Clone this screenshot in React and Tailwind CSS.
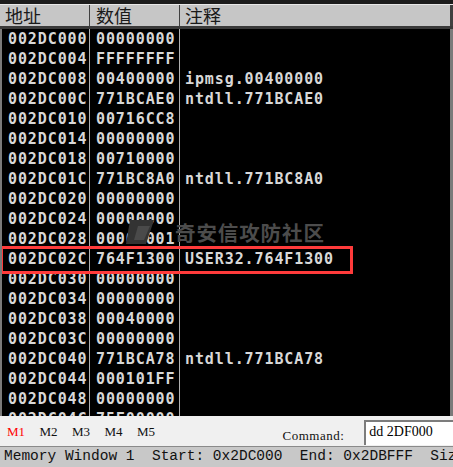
const rows = [
  ['002DC000', '00000000', ''],
  ['002DC004', 'FFFFFFFF', ''],
  ['002DC008', '00400000', 'ipmsg.00400000'],
  ['002DC00C', '771BCAE0', 'ntdll.771BCAE0'],
  ['002DC010', '00716CC8', ''],
  ['002DC014', '00000000', ''],
  ['002DC018', '00710000', ''],
  ['002DC01C', '771BC8A0', 'ntdll.771BC8A0'],
  ['002DC020', '00000000', ''],
  ['002DC024', '00000000', ''],
  ['002DC028', '00000001', ''],
  ['002DC02C', '764F1300', 'USER32.764F1300'],
  ['002DC030', '00000000', ''],
  ['002DC034', '00000000', ''],
  ['002DC038', '00040000', ''],
  ['002DC03C', '00000000', ''],
  ['002DC040', '771BCA78', 'ntdll.771BCA78'],
  ['002DC044', '000101FF', ''],
  ['002DC048', '00000000', ''],
  ['002DC04C', '75F00000', ''],
]

const tabs = ['M1', 'M2', 'M3', 'M4', 'M5']

export default function App() {
  return (
    <div className="w-[453px] h-[467px] flex flex-col overflow-hidden bg-black">
      {/* clipped row above the header */}
      <div className="h-[4px] bg-[#1c1c1c] shrink-0" />
      <div className="h-[1px] bg-[#e8e8e8] shrink-0" />

      {/* column header */}
      <div className="h-[24px] shrink-0 grid grid-cols-[90px_90px_1fr] bg-[#c6c6c6] border-b-[3px] border-[#3a3a3a] text-[18px] leading-[21px] text-[#1a1a1a] font-['Noto_Sans_CJK_SC',sans-serif]">
        <div className="pl-[5px] border-r border-[#404040]">地址</div>
        <div className="pl-[6px] border-r border-[#404040]">数值</div>
        <div className="pl-[5px] border-r-[3px] border-[#404040]">注释</div>
      </div>

      {/* dump body */}
      <div className="relative flex-1 min-h-0 overflow-hidden bg-black border-l-2 border-r-[3px] border-[#7a7a7a] font-['DejaVu_Sans_Mono',monospace] font-bold text-[15px] tracking-[0.9px] text-[#d8d8d8]">
        {rows.map((r) => (
          <div key={r[0]} className="h-[20px] grid grid-cols-[88px_90px_1fr] leading-[20px] whitespace-pre">
            <div className="pl-[6px] border-r border-[#b0b0b0]">{r[0]}</div>
            <div className="pl-[6px] border-r border-[#b0b0b0]">{r[1]}</div>
            <div className="pl-[5px]">{r[2]}</div>
          </div>
        ))}

        {/* watermark */}
        <div className="absolute left-[122px] top-[189px] flex items-center gap-[3px] pointer-events-none">
          <svg width="48" height="28" viewBox="0 0 48 28">
            <path d="M6 2 L30 2 L22 26 L2 26 Z" fill="#333" />
            <path d="M14 8 L26 8 L20 22 L10 22 Z" fill="#4a4a4a" />
          </svg>
          <span className="text-[20.5px] leading-[24px] font-bold text-[#4c4c4c] font-['Noto_Sans_CJK_SC',sans-serif]">奇安信攻防社区</span>
        </div>

        {/* highlight box */}
        <div className="absolute left-[-2px] top-[217px] w-[353px] h-[28px] border-[3px] border-[#ff3b3b]" />
      </div>

      {/* tab bar + command */}
      <div className="h-[30px] shrink-0 bg-[#f0f0f0] flex items-end font-['Liberation_Serif',serif]">
        <div className="flex pl-[7px] pb-[7px] text-[13px] leading-[14px]">
          {tabs.map((t, i) => (
            <span key={t} className={`w-[32.5px] ${i === 0 ? 'text-[#ff0000]' : 'text-[#111]'}`}>{t}</span>
          ))}
        </div>
        <span className="ml-[113px] pb-[3px] text-[13px] leading-[14px] text-[#111] tracking-[0.5px]">Command:</span>
        <div className="ml-[20px] mb-[1px] h-[25px] flex-1 bg-white border-t-2 border-l-2 border-[#7c7c7c] pl-[3px] text-[14px] leading-[20px] text-black">dd 2DF000</div>
      </div>

      {/* status bar */}
      <div className="h-[21px] shrink-0 bg-[#c8c8c8] border-t border-[#8a8a8a] pl-[4px] font-['Liberation_Mono',monospace] text-[14.5px] leading-[19px] text-[#111] whitespace-pre overflow-hidden">
        Memory Window 1  Start: 0x2DC000  End: 0x2DBFFF  Size: 0x4000
      </div>
    </div>
  )
}
